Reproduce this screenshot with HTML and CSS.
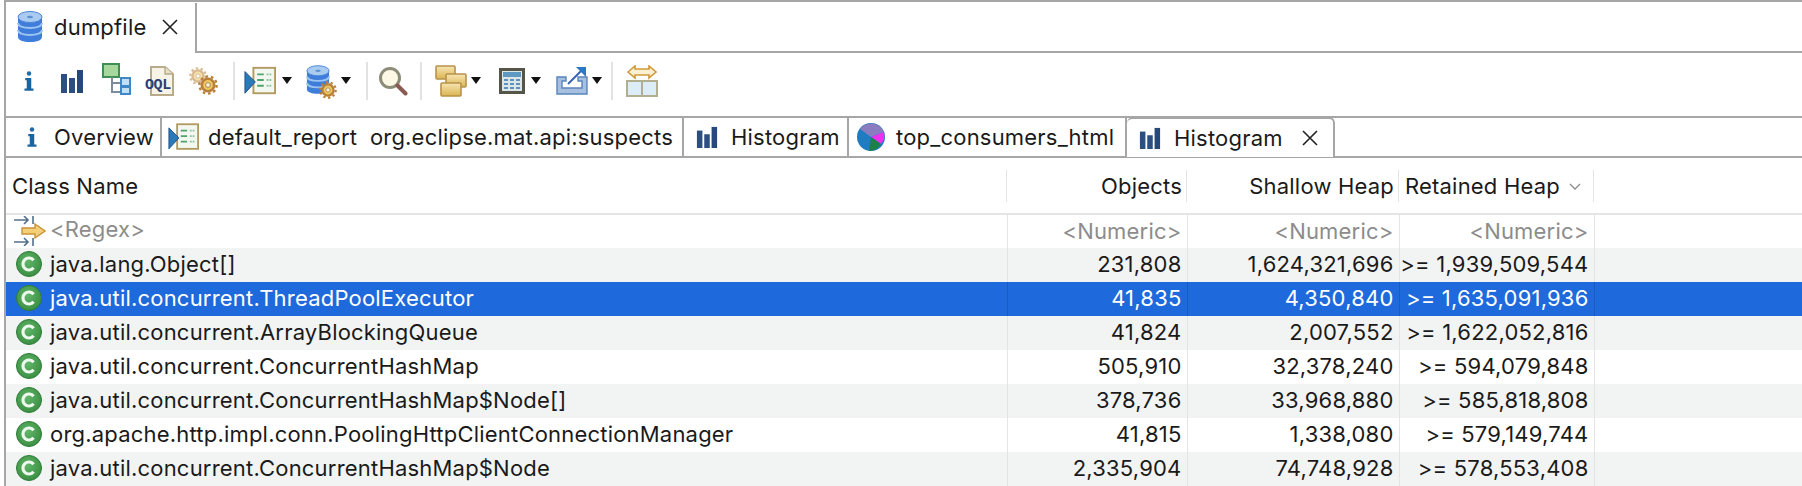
FILE: index.html
```html
<!DOCTYPE html>
<html lang="en">
<head>
  <meta charset="UTF-8">
  <title>dumpfile - Histogram</title>
  <link rel="stylesheet" href="styles.css">
</head>
<body>

  <svg class="defs" width="0" height="0">
    <defs>
      <linearGradient id="gold" x1="0" y1="0" x2="0" y2="1">
        <stop offset="0" stop-color="#f6e5b4"/>
        <stop offset="1" stop-color="#dcb552"/>
      </linearGradient>
      <radialGradient id="green" cx="0.45" cy="0.4" r="0.7">
        <stop offset="0" stop-color="#5fb568"/>
        <stop offset="1" stop-color="#35893c"/>
      </radialGradient>
      <symbol id="i-info" viewBox="0 0 16 28">
        <circle cx="8" cy="4" r="3" fill="#1f6ca8"/>
        <path d="M3 10h8v14h3v3H2v-3h3V13H3z" fill="#1b659e"/>
      </symbol>
      <symbol id="i-bars" viewBox="0 0 24 24">
        <rect x="1" y="5" width="6" height="19" fill="#2c4f80"/>
        <rect x="9" y="9" width="6" height="15" fill="#2c4f80"/>
        <rect x="17" y="1" width="6" height="23" fill="#27497a"/>
      </symbol>
      <symbol id="i-report" viewBox="0 0 34 30">
        <rect x="10" y="1" width="23" height="27" fill="#f2f8f0" stroke="#b09a62" stroke-width="2"/>
        <path d="M14 8h7M14 14h7M14 20h7" stroke="#4fa36c" stroke-width="2"/>
        <path d="M24 8h5M24 14h5M24 20h5" stroke="#8fc3a0" stroke-width="2" stroke-dasharray="2 1"/>
        <path d="M1 5l11 11L1 28z" fill="#2a7ab8" stroke="#1d4f86"/>
      </symbol>
      <symbol id="i-db" viewBox="0 0 26 32">
        <path d="M1 6v20c0 3 5 5 12 5s12-2 12-5V6z" fill="#3f7ddb"/>
        <path d="M1 12c0 3 5 5 12 5s12-2 12-5M1 19c0 3 5 5 12 5s12-2 12-5" fill="none" stroke="#9cc4f2" stroke-width="2"/>
        <ellipse cx="13" cy="6" rx="12" ry="5.5" fill="#a9cbf0" stroke="#4a86d8"/>
        <ellipse cx="13" cy="6" rx="3" ry="1.2" fill="#5a8fd0"/>
      </symbol>
      <symbol id="i-arrow" viewBox="0 0 10 7">
        <path d="M0 0h10L5 7z" fill="#111"/>
      </symbol>
      <symbol id="i-class" viewBox="0 0 26 26">
        <circle cx="13" cy="13" r="12.5" fill="url(#green)" stroke="#2f7d38"/>
        <path d="M17.6 9.2a6 6 0 1 0 0 7.6" fill="none" stroke="#eef8ee" stroke-width="3.2"/>
      </symbol>
      <symbol id="i-close" viewBox="0 0 18 18">
        <path d="M2 2l14 14M16 2L2 16" stroke="#222" stroke-width="1.6" fill="none"/>
      </symbol>
      <symbol id="i-gear" viewBox="0 0 20 20">
        <circle cx="10" cy="10" r="6.2" fill="#f0c862" stroke="#b9803a" stroke-width="2.6"/>
        <circle cx="10" cy="10" r="8.6" fill="none" stroke="#b9803a" stroke-width="2.4" stroke-dasharray="2.6 2.8"/>
        <circle cx="10" cy="10" r="2.4" fill="#f7efd8" stroke="#9c7440" stroke-width="0.8"/>
      </symbol>
    </defs>
  </svg>

  <div class="window">
    <div class="editor-tabs">
      <div class="editor-tab">
        <svg class="ico-db"><use href="#i-db"/></svg>
        <span class="label">dumpfile</span>
        <svg class="ico-close"><use href="#i-close"/></svg>
      </div>
    </div>

    <div class="toolbar">
      <svg class="tool t-info"><use href="#i-info"/></svg>
      <svg class="tool t-bars"><use href="#i-bars"/></svg>
      <svg class="tool t-tree" viewBox="0 0 29 32">
        <rect x="1" y="1" width="16" height="13" fill="#a6d79c" stroke="#3f8f55" stroke-width="2"/>
        <path d="M10 14v15h9M10 20h9" stroke="#7d8c9c" stroke-width="2" fill="none"/>
        <rect x="19" y="15" width="9" height="8" fill="#bfe0f6" stroke="#3f87c6" stroke-width="2"/>
        <rect x="19" y="24" width="9" height="7" fill="#bfe0f6" stroke="#3f87c6" stroke-width="2"/>
      </svg>
      <svg class="tool t-oql" viewBox="0 0 29 30">
        <path d="M6 1h14l8 7v21H6z" fill="#f7f3e6" stroke="#b7ab8a" stroke-width="2"/>
        <path d="M20 1v7h8" fill="#e8dfc6" stroke="#b7ab8a" stroke-width="1.4"/>
        <text x="0" y="23" class="oql">OQL</text>
      </svg>
      <svg class="tool t-gears" viewBox="0 0 30 30">
        <use href="#i-gear" x="1" y="1" width="18" height="18" opacity="0.55"/>
        <use href="#i-gear" x="10" y="9" width="20" height="20"/>
      </svg>
      <span class="sep"></span>
      <svg class="tool t-report"><use href="#i-report"/></svg>
      <svg class="drop"><use href="#i-arrow"/></svg>
      <span class="db-gear">
        <svg class="t-db"><use href="#i-db"/></svg>
        <svg class="t-db-gear"><use href="#i-gear"/></svg>
      </span>
      <svg class="drop drop-db"><use href="#i-arrow"/></svg>
      <span class="sep sep-b"></span>
      <svg class="tool t-search" viewBox="0 0 30 30">
        <circle cx="12" cy="12" r="9.5" fill="#fbf9e6" stroke="#8c8c78" stroke-width="3"/>
        <path d="M19.5 19.5l8 8" stroke="#8a5a54" stroke-width="4" stroke-linecap="round"/>
      </svg>
      <span class="sep sep-c"></span>
      <svg class="tool t-windows" viewBox="0 0 32 32">
        <rect x="1" y="1" width="19" height="13" rx="1" fill="url(#gold)" stroke="#b8934a" stroke-width="1.6"/>
        <rect x="11" y="9" width="20" height="13" rx="1" fill="url(#gold)" stroke="#b8934a" stroke-width="1.6"/>
        <rect x="6" y="18" width="20" height="13" rx="1" fill="url(#gold)" stroke="#b8934a" stroke-width="1.6"/>
      </svg>
      <svg class="drop drop-win"><use href="#i-arrow"/></svg>
      <svg class="tool t-calc" viewBox="0 0 26 26">
        <rect x="1.5" y="1.5" width="23" height="23" fill="#dce6e6" stroke="#55554a" stroke-width="3"/>
        <rect x="4" y="4" width="18" height="5" fill="#5f98c0"/>
        <path d="M5 12h4M11 12h4M17 12h4M5 16h4M11 16h4M17 16h4M5 20h4M11 20h4M17 20h4" stroke="#5d93bf" stroke-width="2"/>
      </svg>
      <svg class="drop drop-b"><use href="#i-arrow"/></svg>
      <svg class="tool t-export" viewBox="0 0 32 28">
        <path d="M1 10h9v4H6v7h20v-7h-4v-4h9v17H1z" fill="#a8c0e0" stroke="#5a84bc" stroke-width="1.4"/>
        <path d="M12 17L25 4" stroke="#3a62b4" stroke-width="2"/>
        <path d="M20 0h10v10z" fill="#2a78c8"/>
      </svg>
      <svg class="drop drop-win"><use href="#i-arrow"/></svg>
      <span class="sep sep-d"></span>
      <svg class="tool t-cols" viewBox="0 0 32 32">
        <rect x="1" y="16" width="30" height="15" fill="#dcedf8" stroke="#b4ae90" stroke-width="2"/>
        <path d="M16 16v15" stroke="#b4ae90" stroke-width="2"/>
        <path d="M2 7l7-6v3h14V1l7 6-7 6v-3H9v3z" fill="#fbf0d2" stroke="#cf9a3c" stroke-width="1.6"/>
      </svg>
    </div>

    <div class="view-tabs">
      <div class="view-tab w-overview">
        <svg class="tab-info"><use href="#i-info"/></svg>
        <span class="label">Overview</span>
      </div>
      <div class="view-tab w-report">
        <svg class="tab-report"><use href="#i-report"/></svg>
        <span class="label">default_report&nbsp; org.eclipse.mat.api:suspects</span>
      </div>
      <div class="view-tab w-histo">
        <svg class="tab-bars"><use href="#i-bars"/></svg>
        <span class="label">Histogram</span>
      </div>
      <div class="view-tab w-top">
        <svg class="tab-pie" viewBox="0 0 28 28">
          <circle cx="14" cy="14" r="14" fill="#1f7cc0"/>
          <path d="M14 14L3 6A14 14 0 0 1 27 9z" fill="#8a7cc0"/>
          <path d="M14 14l13-5a14 14 0 0 1-3 12z" fill="#f030f0"/>
          <path d="M14 14l10 7a14 14 0 0 1-12 7z" fill="#1e8048"/>
        </svg>
        <span class="label">top_consumers_html</span>
      </div>
      <div class="view-tab w-active active">
        <svg class="tab-bars"><use href="#i-bars"/></svg>
        <span class="label">Histogram</span>
        <svg class="ico-close"><use href="#i-close"/></svg>
      </div>
    </div>

    <table class="histogram">
      <colgroup>
        <col class="c-name"><col class="c-obj"><col class="c-shallow"><col class="c-retained"><col>
      </colgroup>
      <thead>
        <tr>
          <th class="left">Class Name</th>
          <th>Objects</th>
          <th>Shallow Heap</th>
          <th class="left th-ret">Retained Heap<svg class="sort" viewBox="0 0 12 8"><path d="M1 1l5 5 5-5" fill="none" stroke="#8a8a8a" stroke-width="1.3"/></svg></th>
          <th class="blank"></th>
        </tr>
      </thead>
      <tbody>
        <tr class="filter">
          <td class="name">
            <svg class="ico-filter" viewBox="0 0 32 30">
              <path d="M0 4h13M10 0l4 4-4 4M19 0v8M0 26h13M10 22l4 4-4 4M19 22v8" stroke="#52708c" stroke-width="1.6" fill="none"/>
              <path d="M8 12h13V8l10 7-10 7v-4H8z" fill="#f3d078" stroke="#cc9238" stroke-width="1.4"/>
            </svg>&lt;Regex&gt;
          </td>
          <td>&lt;Numeric&gt;</td><td>&lt;Numeric&gt;</td><td>&lt;Numeric&gt;</td><td></td>
        </tr>
        <tr class="alt">
          <td class="name"><svg class="ico-class"><use href="#i-class"/></svg>java.lang.Object[]</td>
          <td>231,808</td><td>1,624,321,696</td><td>&gt;= 1,939,509,544</td><td></td>
        </tr>
        <tr class="selected">
          <td class="name"><svg class="ico-class"><use href="#i-class"/></svg>java.util.concurrent.ThreadPoolExecutor</td>
          <td>41,835</td><td>4,350,840</td><td>&gt;= 1,635,091,936</td><td></td>
        </tr>
        <tr class="alt">
          <td class="name"><svg class="ico-class"><use href="#i-class"/></svg>java.util.concurrent.ArrayBlockingQueue</td>
          <td>41,824</td><td>2,007,552</td><td>&gt;= 1,622,052,816</td><td></td>
        </tr>
        <tr>
          <td class="name"><svg class="ico-class"><use href="#i-class"/></svg>java.util.concurrent.ConcurrentHashMap</td>
          <td>505,910</td><td>32,378,240</td><td>&gt;= 594,079,848</td><td></td>
        </tr>
        <tr class="alt">
          <td class="name"><svg class="ico-class"><use href="#i-class"/></svg>java.util.concurrent.ConcurrentHashMap$Node[]</td>
          <td>378,736</td><td>33,968,880</td><td>&gt;= 585,818,808</td><td></td>
        </tr>
        <tr>
          <td class="name"><svg class="ico-class"><use href="#i-class"/></svg>org.apache.http.impl.conn.PoolingHttpClientConnectionManager</td>
          <td>41,815</td><td>1,338,080</td><td>&gt;= 579,149,744</td><td></td>
        </tr>
        <tr class="alt">
          <td class="name"><svg class="ico-class"><use href="#i-class"/></svg>java.util.concurrent.ConcurrentHashMap$Node</td>
          <td>2,335,904</td><td>74,748,928</td><td>&gt;= 578,553,408</td><td></td>
        </tr>
      </tbody>
    </table>
  </div>

</body>
</html>
```

FILE: styles.css
```css
html, body {
  margin: 0;
  height: 100%;
  background: #fff;
  overflow: hidden;
}

body {
  font-family: Inter, "Liberation Sans", sans-serif;
  font-size: 22px;
  letter-spacing: 0.2px;
  color: #1a1a1a;
}

svg {
  display: block;
  flex: none;
}

.defs {
  position: absolute;
}

.window {
  height: 484px;
  margin-left: 4px;
  border-top: 2px solid #a6a6a6;
  border-left: 2px solid #a6a6a6;
  overflow: hidden;
}

/* top editor tab */
.editor-tabs {
  height: 48px;
  padding-top: 1px;
  border-bottom: 2px solid #a6a6a6;
  display: flex;
}

.editor-tab {
  width: 191px;
  height: 50px;
  box-sizing: border-box;
  background: #fff;
  border-right: 2px solid #a6a6a6;
  display: flex;
  align-items: center;
  padding: 0 0 2px 11px;
}

.ico-db {
  width: 26px;
  height: 32px;
}

.editor-tab .label {
  margin-left: 11px;
}

.ico-close {
  width: 18px;
  height: 18px;
}

.editor-tab .ico-close {
  margin-left: 15px;
}

/* toolbar */
.toolbar {
  height: 55px;
  padding: 0 0 8px 17px;
  display: flex;
  align-items: center;
  border-bottom: 2px solid #a6a6a6;
}

.sep {
  width: 2px;
  height: 38px;
  background: #e2e2e2;
  margin-left: 15px;
}

.drop {
  width: 10px;
  height: 7px;
  margin-left: 6px;
}

.t-info { width: 12px; height: 24px; }
.t-bars { width: 24px; height: 24px; margin-left: 25px; }
.t-tree { width: 29px; height: 32px; margin-left: 18px; margin-top: -4px; }
.t-oql { width: 29px; height: 30px; margin-left: 14px; }
.t-gears { width: 30px; height: 30px; margin-left: 14px; }
.t-report { width: 32px; height: 30px; margin-left: 9px; }
.db-gear { position: relative; width: 28px; height: 32px; margin-left: 14px; }
.t-db { width: 24px; height: 30px; }
.t-db-gear { position: absolute; right: -3px; bottom: -2px; width: 18px; height: 18px; }
.drop-db { margin-left: 7px; }
.sep-b { margin-left: 15px; }
.t-search { width: 30px; height: 30px; margin-left: 10px; }
.sep-c { margin-left: 12px; }
.t-windows { width: 32px; height: 32px; margin-left: 13px; }
.drop-win { margin-left: 4px; }
.t-calc { width: 26px; height: 26px; margin-left: 18px; }
.drop-b { margin-left: 6px; }
.t-export { width: 32px; height: 28px; margin-left: 15px; }
.sep-d { margin-left: 9px; }
.t-cols { width: 32px; height: 32px; margin-left: 13px; }

.oql {
  font-family: "Liberation Mono", monospace;
  font-size: 15px;
  font-weight: 700;
  letter-spacing: -0.4px;
  fill: #2a3f78;
}

/* view tabs */
.view-tabs {
  height: 38px;
  display: flex;
  border-bottom: 2px solid #a6a6a6;
}

.view-tab {
  box-sizing: border-box;
  height: 38px;
  display: flex;
  align-items: center;
  border-right: 2px solid #a6a6a6;
  white-space: nowrap;
}

.w-overview { width: 156px; padding-left: 20px; }
.w-report { width: 522px; padding-left: 6px; }
.w-histo { width: 165px; padding-left: 12px; }
.w-top { width: 278px; padding-left: 8px; }

.w-active {
  width: 208px;
  height: 40px;
  padding-left: 12px;
  margin-top: -1px;
  background: #fff;
  border: 2px solid #a6a6a6;
  border-bottom: none;
  border-left: none;
  border-radius: 6px 6px 0 0;
}

.view-tab .label {
  margin-left: 16px;
}

.tab-info { width: 12px; height: 24px; }
.tab-report { width: 31px; height: 28px; }
.tab-bars { width: 22px; height: 24px; }
.tab-pie { width: 28px; height: 28px; }

.w-report .label { margin-left: 9px; }
.w-histo .label { margin-left: 13px; }
.w-top .label { margin-left: 11px; }
.w-active .label { margin-left: 13px; }
.w-active .ico-close { margin-left: 18px; }

/* histogram table */
.histogram {
  width: 1796px;
  table-layout: fixed;
  border-collapse: collapse;
}

.c-name { width: 1001px; }
.c-obj { width: 180px; }
.c-shallow { width: 212px; }
.c-retained { width: 195px; }

th {
  height: 55px;
  padding: 0 5px 0 0;
  font-weight: 400;
  text-align: right;
  white-space: nowrap;
  border-bottom: 2px solid #e4e4e4;
  background-image: linear-gradient(#e4e4e4, #e4e4e4);
  background-repeat: no-repeat;
  background-size: 1px 32px;
  background-position: right center;
}

th.left {
  text-align: left;
  padding-left: 6px;
}

th.blank {
  background: none;
}

.sort {
  display: inline-block;
  width: 12px;
  height: 8px;
  margin-left: 9px;
  vertical-align: 3px;
}

td {
  height: 34px;
  padding: 0 5px 2px 0;
  box-sizing: border-box;
  text-align: right;
  white-space: nowrap;
  border-right: 1px solid #e4e4e4;
}

td:last-child {
  border-right: none;
}

td.name {
  text-align: left;
  padding-left: 10px;
}

.ico-class,
.ico-filter {
  display: inline-block;
  vertical-align: middle;
  width: 26px;
  height: 26px;
  margin: -3px 8px 0 0;
}

.ico-filter {
  width: 32px;
  height: 30px;
  margin: 0 4px 0 -2px;
}

.filter td {
  color: #8c8c8c;
}

.alt td {
  background: #f2f4f4;
}

.selected td {
  background: #1e69dc;
  color: #fff;
  border-right-color: #1a5cc0;
}
```
